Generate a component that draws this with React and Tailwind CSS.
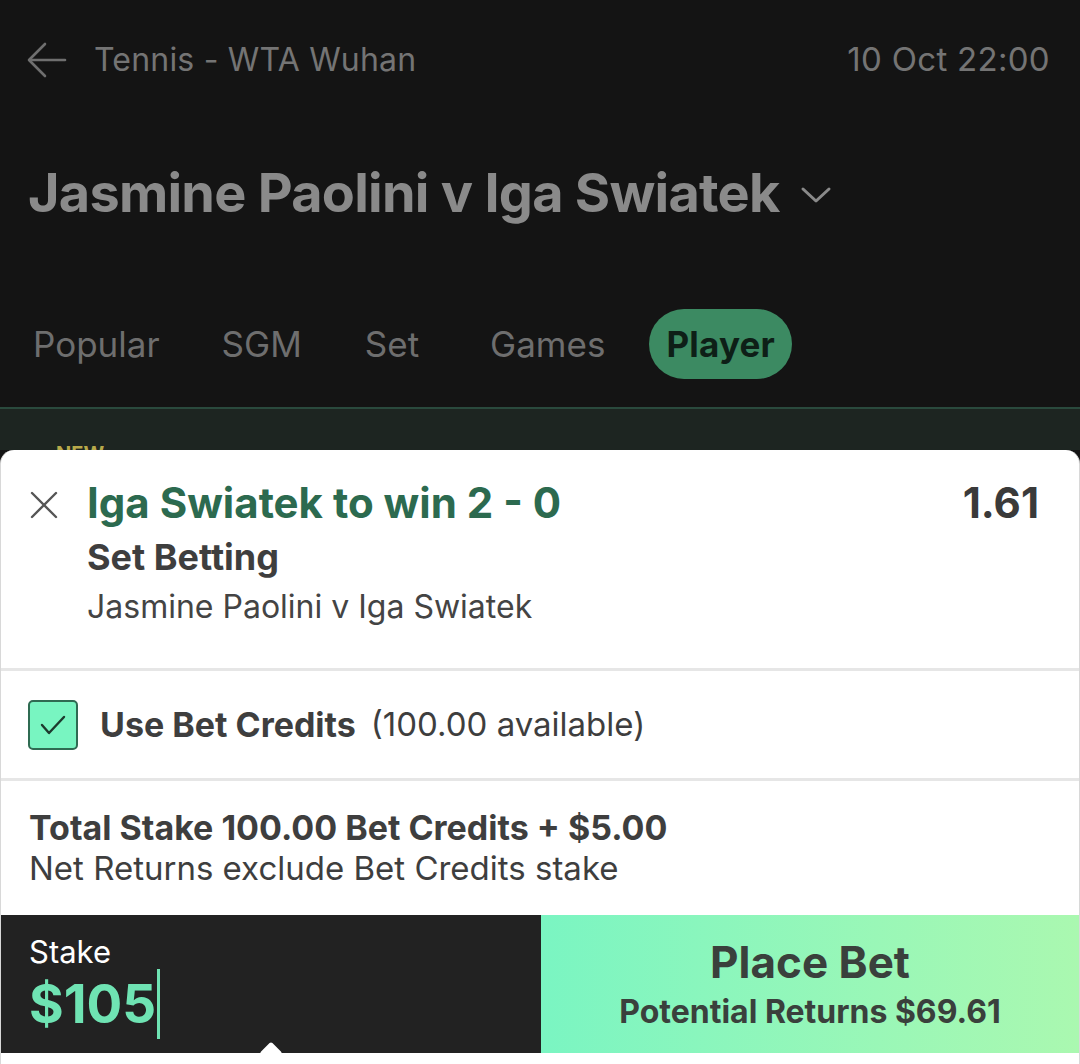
import React from "react";

export default function App() {
  return (
    <div className="w-[1080px] h-[1064px] overflow-hidden bg-[#141414] flex flex-col" style={{ fontFamily: "Inter, 'Noto Sans', sans-serif" }}>
      {/* header */}
      <div className="h-[120px] shrink-0 flex items-center justify-between pl-[27px] pr-[30px]">
        <div className="flex items-center">
          <svg width="40" height="36" viewBox="0 0 40 36" fill="none" stroke="#6f6f6f" strokeWidth="2.6" strokeLinecap="round" strokeLinejoin="round">
            <path d="M38 18H3" />
            <path d="M18 2L2 18l16 16" />
          </svg>
          <span className="ml-[27px] text-[32px] text-[#747474] tracking-[0.2px]">Tennis - WTA Wuhan</span>
        </div>
        <span className="text-[33px] text-[#747474] tracking-[0.3px]">10 Oct 22:00</span>
      </div>
      {/* title */}
      <div className="h-[145px] shrink-0 flex items-center pl-[28px]">
        <span className="text-[54px] font-bold text-[#8a8a8a] tracking-[-0.75px]">Jasmine Paolini v Iga Swiatek</span>
        <svg className="ml-[20px] mt-[4px]" width="32" height="20" viewBox="0 0 32 20" fill="none" stroke="#8a8a8a" strokeWidth="3" strokeLinecap="round" strokeLinejoin="round">
          <path d="M3 4l13 12L29 4" />
        </svg>
      </div>
      {/* tabs */}
      <div className="h-[142px] shrink-0 pt-[44px] pl-[16px] flex items-start">
        <div className="h-[70px] px-[17px] flex items-center text-[35px] text-[#6e6e6e]">Popular</div>
        <div className="h-[70px] px-[17px] ml-[28px] flex items-center text-[35px] text-[#6e6e6e]">SGM</div>
        <div className="h-[70px] px-[17px] ml-[29px] flex items-center text-[35px] text-[#6e6e6e]">Set</div>
        <div className="h-[70px] px-[17px] ml-[37px] flex items-center text-[35px] text-[#6e6e6e]">Games</div>
        <div className="h-[70px] px-[17px] ml-[27px] rounded-full bg-[#3c8a62] flex items-center text-[35px] font-bold text-[#0e1f17] tracking-[0.2px]">Player</div>
      </div>
      <div className="h-[2px] shrink-0 bg-[#2a4a3d]" />
      <div className="h-[41px] shrink-0 bg-[#1d2521] relative">
        <span className="absolute left-[56px] top-[35px] text-[20px] font-bold text-[#b8a94a] leading-none">NEW</span>
      </div>
      {/* card */}
      <div className="relative bg-white rounded-t-[14px] border-x border-[#d8d8d8] flex flex-col flex-1">
        <div className="h-[218px] shrink-0 flex items-start pl-[28px] pr-[40px] pt-[30px]">
          <svg className="mt-[10px] shrink-0" width="30" height="30" viewBox="0 0 30 30" fill="none" stroke="#555" strokeWidth="2.4" strokeLinecap="round">
            <path d="M3 3l24 24M27 3L3 27" />
          </svg>
          <div className="ml-[28px] flex-1 flex flex-col">
            <div className="flex justify-between items-start">
              <span className="text-[42px] leading-[46px] font-bold text-[#2c6a4f]">Iga Swiatek to win 2 - 0</span>
              <span className="text-[42px] leading-[46px] font-bold text-[#3a3a3a]">1.61</span>
            </div>
            <span className="text-[36px] leading-[40px] mt-[11px] font-bold text-[#3e3e3e]">Set Betting</span>
            <span className="text-[32px] leading-[40px] mt-[10px] text-[#444]">Jasmine Paolini v Iga Swiatek</span>
          </div>
        </div>
        <div className="h-[3px] shrink-0 bg-[#e6e6e6]" />
        <div className="h-[107px] shrink-0 flex items-center pl-[27px]">
          <div className="w-[50px] h-[50px] rounded-[5px] bg-[#78f5c1] border-[2px] border-[#2f6b52] flex items-center justify-center">
            <svg width="28" height="22" viewBox="0 0 28 22" fill="none" stroke="#1d3a2e" strokeWidth="2.4" strokeLinecap="round" strokeLinejoin="round">
              <path d="M3 11l7 8L25 3" />
            </svg>
          </div>
          <span className="ml-[22px] text-[34px] font-bold text-[#3e3e3e]">Use Bet Credits</span>
          <span className="ml-[15px] text-[33px] text-[#3e3e3e]">(100.00 available)</span>
        </div>
        <div className="h-[3px] shrink-0 bg-[#e6e6e6]" />
        <div className="h-[134px] shrink-0 flex flex-col justify-center pl-[28px]">
          <span className="text-[34px] leading-[41px] font-bold text-[#3e3e3e]">Total Stake 100.00 Bet Credits + $5.00</span>
          <span className="text-[33px] leading-[41px] text-[#3e3e3e]">Net Returns exclude Bet Credits stake</span>
        </div>
        {/* bottom bar */}
        <div className="h-[138px] shrink-0 flex">
          <div className="w-[540px] bg-[#222222] flex flex-col pl-[28px] pt-[19px]">
            <span className="text-[31px] leading-[36px] text-white">Stake</span>
            <div className="flex items-center -mt-[1px]">
              <span className="text-[53px] leading-[64px] font-bold text-[#6fe3b3]">$105</span>
              <div className="w-[3px] h-[70px] bg-[#6fe3b3] ml-[1px]" />
            </div>
          </div>
          <div className="flex-1 bg-gradient-to-r from-[#7af5c2] to-[#aaf8b0] flex flex-col items-center justify-center">
            <span className="text-[44px] leading-[50px] font-bold text-[#3a403c]">Place Bet</span>
            <span className="text-[32px] leading-[38px] mt-[6px] font-bold text-[#3a403c]">Potential Returns $69.61</span>
          </div>
        </div>
        <div className="flex-1 bg-white relative">
          <div className="absolute left-[262px] -top-[8px] w-[16px] h-[16px] bg-white rotate-45 rounded-[2px]" />
        </div>
      </div>
    </div>
  );
}
